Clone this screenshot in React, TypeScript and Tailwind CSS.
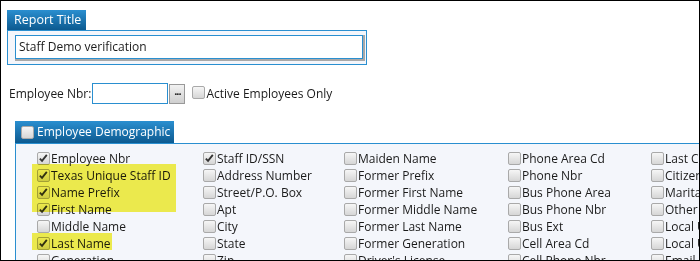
import React from 'react';

type Item = { label: string; checked?: boolean };

const columns: { width: string; items: Item[] }[] = [
  {
    width: 'w-[166px]',
    items: [
      { label: 'Employee Nbr', checked: true },
      { label: 'Texas Unique Staff ID', checked: true },
      { label: 'Name Prefix', checked: true },
      { label: 'First Name', checked: true },
      { label: 'Middle Name' },
      { label: 'Last Name', checked: true },
      { label: 'Generation' },
    ],
  },
  {
    width: 'w-[141px]',
    items: [
      { label: 'Staff ID/SSN', checked: true },
      { label: 'Address Number' },
      { label: 'Street/P.O. Box' },
      { label: 'Apt' },
      { label: 'City' },
      { label: 'State' },
      { label: 'Zip' },
    ],
  },
  {
    width: 'w-[164px]',
    items: [
      { label: 'Maiden Name' },
      { label: 'Former Prefix' },
      { label: 'Former First Name' },
      { label: 'Former Middle Name' },
      { label: 'Former Last Name' },
      { label: 'Former Generation' },
      { label: "Driver's License" },
    ],
  },
  {
    width: 'w-[143px]',
    items: [
      { label: 'Phone Area Cd' },
      { label: 'Phone Nbr' },
      { label: 'Bus Phone Area' },
      { label: 'Bus Phone Nbr' },
      { label: 'Bus Ext' },
      { label: 'Cell Area Cd' },
      { label: 'Cell Phone Nbr' },
    ],
  },
  {
    width: 'w-[120px]',
    items: [
      { label: 'Last Change Date' },
      { label: 'Citizenship' },
      { label: 'Marital Status' },
      { label: 'Other Name' },
      { label: 'Local Use 1' },
      { label: 'Local Use 2' },
      { label: 'Email' },
    ],
  },
];

const Box: React.FC<{ checked?: boolean }> = ({ checked }) => (
  <span className="relative inline-block w-[13px] h-[13px] shrink-0 rounded-[2px] border border-[#a9a9a9] bg-gradient-to-b from-[#f6f6f6] to-[#d6d6d6]">
    {checked && (
      <svg viewBox="0 0 12 12" className="absolute left-[0px] top-[0px] w-[11px] h-[11px]">
        <path d="M2 6.2 L4.4 8.6 L9.6 2" fill="none" stroke="#333" strokeWidth="2" />
      </svg>
    )}
  </span>
);

const App: React.FC = () => {
  return (
    <div
      className="relative w-[700px] h-[261px] overflow-hidden border border-black bg-white text-[12px] text-[#1b1b1b]"
      style={{ fontFamily: '"Open Sans", "Noto Sans", sans-serif' }}
    >
      {/* report title */}
      <div className="ml-[6px] mt-[9px]">
        <div className="w-[79px] h-[20px] pl-[7px] leading-[20px] text-[12.5px] whitespace-nowrap text-white bg-gradient-to-b from-[#2a8fd0] to-[#0c5a90]">
          Report Title
        </div>
        <div className="w-[360px] h-[35px] border border-[#2a8fd0] bg-[#f4f6fb] px-[7px] pt-[4px]">
          <div className="w-[348px] h-[24px] border border-[#2a8fd0] bg-white shadow-[1px_1px_0_1px_#a8a8a8] pl-[3px] leading-[22px] text-[12px]">
            Staff Demo verification
          </div>
        </div>
      </div>

      {/* employee filter */}
      <div className="flex items-center ml-[8px] mt-[18px] h-[21px]">
        <span>Employee Nbr:</span>
        <div className="w-[76px] h-[21px] border border-[#2a8fd0] bg-white ml-[1px]" />
        <div className="w-[16px] h-[20px] ml-[1px] border border-[#999] bg-gradient-to-b from-[#f2f2f2] to-[#cfcfcf] flex items-center justify-center text-[11px] leading-none font-bold tracking-[-1px]">
          ···
        </div>
        <span className="ml-[7px] -mt-[2px] flex"><Box /></span>
        <span className="ml-[1px]">Active Employees Only</span>
      </div>

      {/* demographic */}
      <div className="ml-[14px] mt-[17px]">
        <div className="flex w-fit items-center h-[22px] pl-[6px] pr-[4px] text-[12px] whitespace-nowrap text-white bg-gradient-to-b from-[#2a8fd0] to-[#0c5a90]">
          <Box />
          <span className="ml-[3px]">Employee Demographic</span>
        </div>
        <div className="relative border-l border-t border-[#2a8fd0] bg-[#f4f6fb] pl-[21px] pt-[6px] h-[130px]">
          <div className="flex">
            {columns.map((col, ci) => (
              <div key={ci} className={`${col.width} shrink-0`}>
                {col.items.map((it) => (
                  <div key={it.label} className="flex items-center h-[17px] whitespace-nowrap">
                    <Box checked={it.checked} />
                    <span className="ml-[1px]">{it.label}</span>
                  </div>
                ))}
              </div>
            ))}
          </div>
          <div className="absolute left-[16px] top-[20px] w-[144px] h-[48px] bg-[#f6f24e] mix-blend-multiply" />
          <div className="absolute left-[16px] top-[89px] w-[80px] h-[17px] bg-[#f6f24e] mix-blend-multiply" />
        </div>
      </div>
    </div>
  );
};

export default App;
